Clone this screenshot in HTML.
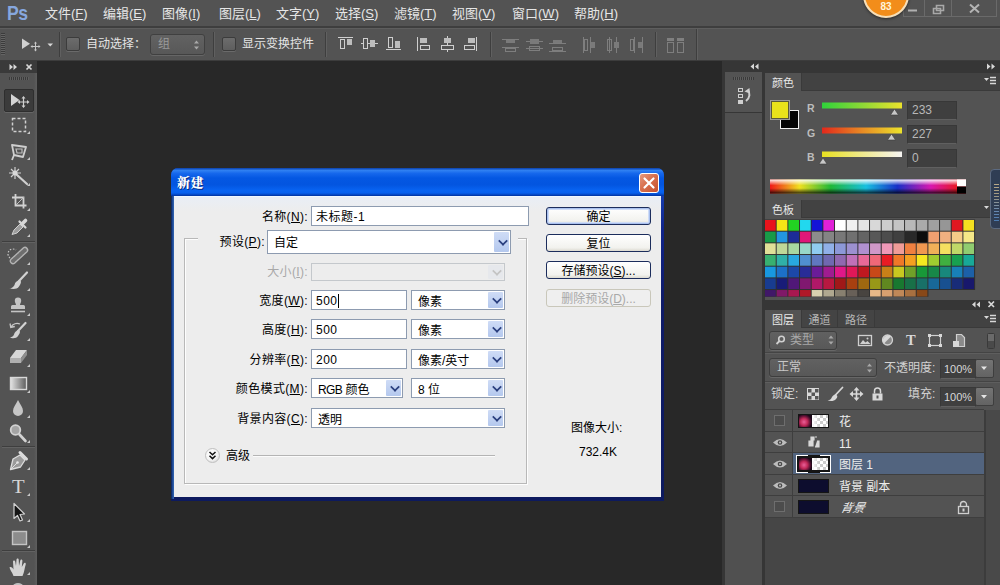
<!DOCTYPE html>
<html lang="zh-CN">
<head>
<meta charset="utf-8">
<title>新建</title>
<style>
*{box-sizing:border-box;margin:0;padding:0}
html,body{width:1000px;height:585px;overflow:hidden;background:#535353}
body{position:relative;font-family:"Liberation Sans","Noto Sans CJK SC",sans-serif;font-size:12px;color:#dcdcdc}
.abs{position:absolute}
u{text-decoration:underline;text-underline-offset:1px}
/* ---------- menu bar ---------- */
#menubar{left:0;top:0;width:1000px;height:28px;background:#535353;border-bottom:2px solid #3e3e3e}
#menubar .mi{position:absolute;top:5px;font-size:13px;color:#e6e6e6;white-space:nowrap;line-height:17px}
#pslogo{left:7px;top:0px;font-size:21px;font-weight:bold;color:#86a7de;letter-spacing:-0.5px;line-height:26px;transform:scaleX(.84);transform-origin:0 0;font-family:"Liberation Sans",sans-serif}
/* ---------- options bar ---------- */
#optbar{z-index:2;left:0;top:28px;width:1000px;height:33px;background:#535353;border-top:1px solid #5e5e5e;border-bottom:1px solid #3c3c3c}

/* options bar details */
#optbar .grip{left:1px;top:4px;width:4px;height:22px;background:repeating-linear-gradient(to bottom,#3c3c3c 0 1px,#646464 1px 2px)}
#optbar .sep{top:3px;width:2px;height:25px;border-left:1px solid #3e3e3e;border-right:1px solid #606060}
#optbar .cb{top:8px;width:14px;height:14px;border:1px solid #3c3c3c;border-radius:2px;background:linear-gradient(#6c6c6c,#5e5e5e);box-shadow:0 1px 0 #6a6a6a}
#optbar .lbl{top:7px;font-size:12px;color:#e4e4e4;white-space:nowrap;line-height:17px}
#optbar .sel{left:150px;top:5px;width:55px;height:21px;border:1px solid #404040;border-radius:3px;background:linear-gradient(#626262,#585858);box-shadow:0 1px 0 #666}
#optbar svg{position:absolute;left:0;top:0}
/* window controls */
#winctl{left:903px;top:-1px;width:94px;height:18px;border:1px solid #6a6a6a;border-top:none}
#badge{left:863px;top:-28px;width:46px;height:46px;border-radius:50%;background:#f28d1a;border:2px solid #f7dfb8;box-shadow:0 1px 3px rgba(0,0,0,.5)}
#badge span{position:absolute;left:0;width:42px;top:27px;text-align:center;font-size:10px;font-weight:bold;color:#fff4dc;line-height:12px;font-family:"Liberation Sans",sans-serif}
/* ---------- canvas ---------- */
#canvas{left:37px;top:60px;width:685px;height:525px;background:#282828}

/* ---------- dialog ---------- */
#dlg{left:171px;top:168px;width:493px;height:333px;border-radius:7px 7px 0 0;background:linear-gradient(to bottom,#1a4fc8 0,#10248a 18%,#0f1b68 40%,#0d1a5e 100%);color:#000;font-size:12px}
#dlg .tb{left:0;top:0;width:493px;height:28px;border-radius:7px 7px 0 0;background:linear-gradient(to bottom,#0a3ea8 0,#2f80f2 9%,#1668ec 19%,#0457e2 36%,#0355e0 60%,#0863f2 80%,#0760ee 89%,#0340b8 97%,#002f98 100%)}
#dlg .ttl{left:6px;top:6px;font-size:13px;font-weight:900;color:#fff;line-height:17px;text-shadow:1px 1px 0 #0a2a80;letter-spacing:0.5px;font-family:"Liberation Serif","Noto Serif CJK SC",serif}
#dlg .cls{left:468px;top:5px;width:20px;height:20px;border:1px solid #fff;border-radius:3px;background:linear-gradient(135deg,#e59a80 0,#d8704e 45%,#c4502e 100%)}
#dlg .body{left:3px;top:28px;width:487px;height:301px;background:linear-gradient(to bottom,#e9eef6 0,#ededed 14px);border-top:1px solid #f0f8ff}
#dlg .lb{position:absolute;width:140px;text-align:right;white-space:nowrap;line-height:17px;height:17px;letter-spacing:.35px}
#dlg .in{position:absolute;height:20px;background:#fff;border:1px solid #8d9bb0;line-height:21px;padding-left:4px;white-space:nowrap;letter-spacing:.5px}
#dlg .se{position:absolute;height:20px;background:#fff;border:1px solid #8d9bb0;line-height:22px;padding-left:6px;white-space:nowrap}
#dlg .se i{position:absolute;right:1px;top:1px;bottom:1px;width:15px;background:linear-gradient(#cfdcf6,#b4c8ee);border-radius:1px}
#dlg .se i:after{content:"";position:absolute;left:4.500px;top:50%;margin-top:-5px;width:6px;height:6px;border-right:2px solid #2b3f7e;border-bottom:2px solid #2b3f7e;transform:rotate(45deg) scale(.85)}
#dlg .bt{position:absolute;left:375px;width:105px;height:18px;border:1px solid #1c2d5c;border-radius:3px;background:linear-gradient(#ffffff,#f2f2ee 80%,#dcdad0);text-align:center;line-height:18px;white-space:nowrap}
#dlg .dis{color:#a8a8a8}
#dlg .se i.g:after{border-color:#c4c4c4}
/* ---------- tools ---------- */
#tools{left:0;top:60px;width:37px;height:525px;background:#535353}
#tools .hdr{left:0;top:0;width:37px;height:13px;background:#3a3a3a}

/* ---------- right panels ---------- */
#right{left:720px;top:60px;width:280px;height:525px;background:#363636}
#right .p{position:absolute;background:#535353}
#right .tabrow{position:absolute;left:45px;width:235px;height:18px;background:#424242;border-bottom:1px solid #3a3a3a}
#right .tab{position:absolute;top:0;height:18px;line-height:20px;font-size:11px;text-align:center;color:#e8e8e8;white-space:nowrap}
#right .tab.on{background:#535353;border-right:1px solid #3a3a3a;height:18px}
#right .tab.off{background:#444;border-right:1px solid #3a3a3a;color:#b8b8b8;height:17px}
#right .vbox{position:absolute;background:#3f3f3f;border:1px solid #383838;border-bottom-color:#606060;color:#b8b8b8;font-size:12px;line-height:17px;padding-left:4px;font-family:"Liberation Sans",sans-serif}
#right .t{position:absolute;white-space:nowrap;line-height:17px;font-size:12px;color:#d2d2d2}
#right .dsel{position:absolute;border:1px solid #3e3e3e;border-radius:3px;background:linear-gradient(#616161,#585858);box-shadow:0 1px 0 #676767}
#right .dbtn{position:absolute;width:19px;height:19px;border:1px solid #3e3e3e;border-radius:2px;background:linear-gradient(#747474,#636363)}
#right .row{position:absolute;left:45px;width:219px;height:22px;background:#535353;border-bottom:1px solid #3e3e3e}
#right .row .nm{position:absolute;left:74px;top:4px;line-height:17px;font-size:12px;color:#ececec;white-space:nowrap}
#right .row .eyecol{position:absolute;left:0;top:0;width:28px;height:21px;border-right:1px solid #3e3e3e}
#right .thumb{position:absolute;left:33px;top:4px;width:31px;height:14px;overflow:hidden;border:1px solid #151515}
#right .fl{position:absolute;left:0;top:0;width:13px;height:13px;background:radial-gradient(ellipse 8px 8px at 5px 7px,#e86098 0,#c02858 45%,#501030 80%,#1a0818 100%)}
#right .fl:after{content:"";position:absolute;left:13px;top:0;width:7px;height:13px;background:linear-gradient(to right,#fff,rgba(255,255,255,0))}
#right .chk{background-color:#fff;background-image:linear-gradient(45deg,#ccc 25%,transparent 25%,transparent 75%,#ccc 75%),linear-gradient(45deg,#ccc 25%,transparent 25%,transparent 75%,#ccc 75%);background-size:6px 6px;background-position:0 0,3px 3px}
#right .vis{position:absolute;left:9px;top:5px;width:11px;height:11px;border:1px solid #6e6e6e;background:#4c4c4c}
</style>
</head>
<body>
<div id="canvas" class="abs"></div>

<!-- MENUBAR -->
<div id="menubar" class="abs">
  <div id="pslogo" class="abs">Ps</div>
  <div class="mi" style="left:45px">文件(<u>F</u>)</div>
  <div class="mi" style="left:103px">编辑(<u>E</u>)</div>
  <div class="mi" style="left:162px">图像(<u>I</u>)</div>
  <div class="mi" style="left:219px">图层(<u>L</u>)</div>
  <div class="mi" style="left:276px">文字(<u>Y</u>)</div>
  <div class="mi" style="left:335px">选择(<u>S</u>)</div>
  <div class="mi" style="left:394px">滤镜(<u>T</u>)</div>
  <div class="mi" style="left:452px">视图(<u>V</u>)</div>
  <div class="mi" style="left:512px">窗口(<u>W</u>)</div>
  <div class="mi" style="left:574px">帮助(<u>H</u>)</div>
</div>

<!-- OPTIONS BAR -->
<div id="optbar" class="abs">
  <div class="grip abs"></div>
  <div class="sep abs" style="left:59px"></div>
  <div class="cb abs" style="left:66px"></div>
  <div class="lbl abs" style="left:86px">自动选择：</div>
  <div class="sel abs"><span class="abs" style="left:7px;top:1px;font-size:12px;color:#9a9a9a;line-height:17px">组</span></div>
  <div class="sep abs" style="left:213px"></div>
  <div class="cb abs" style="left:222px"></div>
  <div class="lbl abs" style="left:242px">显示变换控件</div>
  <div class="sep abs" style="left:325px"></div>
  <div class="sep abs" style="left:490px"></div>
  <div class="sep abs" style="left:655px"></div>
  <div class="sep abs" style="left:696px;top:0;height:31px"></div>
  <svg width="1000" height="31" viewBox="0 28 1000 31" shape-rendering="crispEdges">
    <!-- move tool icon -->
    <g shape-rendering="geometricPrecision">
    <path d="M22 37.500 L22 48 L30 42.800 Z" fill="#d0d0d0"/>
    <path d="M35.500 41.500 v8 M31.500 45.500 h8" stroke="#c8c8c8" stroke-width="1" fill="none"/>
    <path d="M35.500 40.500 l-1.500 2 h3z M35.500 50.500 l-1.500 -2 h3z M30.500 45.500 l2 -1.500 v3z M40.500 45.500 l-2 -1.500 v3z" fill="#c8c8c8"/>
    <path d="M47.500 42.500 h5.500 l-2.750 3z" fill="#d8d8d8"/>
    <path d="M194 42.500 l2.500 -3 l2.500 3z M194 45.500 l2.500 3 l2.500 -3z" fill="#a8a8a8"/>
    </g>
    <!-- align icons -->
    <g fill="none" stroke="#cfcfcf" stroke-width="1" transform="translate(0 -1)">
      <path d="M338 37.500 h15"/><rect x="340.500" y="39.500" width="4" height="9"/><rect x="347" y="39" width="5" height="6" fill="#bdbdbd" stroke="none"/>
      <path d="M361 43.500 h17"/><rect x="363.500" y="38.500" width="4" height="10" fill="#535353"/><rect x="370" y="40" width="5" height="7" fill="#bdbdbd" stroke="none"/>
      <path d="M386 49.500 h15"/><rect x="388.500" y="37.500" width="4" height="10"/><rect x="395" y="41" width="5" height="7" fill="#bdbdbd" stroke="none"/>
      <path d="M417.500 37 v14"/><rect x="420" y="38" width="7" height="5" fill="#bdbdbd" stroke="none"/><rect x="420.500" y="45.500" width="9" height="4"/>
      <path d="M447.500 36 v16"/><rect x="444" y="38" width="7" height="5" fill="#bdbdbd" stroke="none"/><rect x="441.500" y="45.500" width="12" height="4" fill="#535353"/>
      <path d="M476.500 37 v14"/><rect x="468" y="38" width="7" height="5" fill="#bdbdbd" stroke="none"/><rect x="464.500" y="45.500" width="10" height="4"/>
    </g>
    <!-- distribute icons (disabled) -->
    <g fill="none" stroke="#7e7e7e" stroke-width="1">
      <path d="M502 38.500 h17 M502 46.500 h17"/><rect x="506" y="39" width="9" height="3" fill="#7a7a7a" stroke="none"/><rect x="505.500" y="47.500" width="10" height="3"/>
      <path d="M526 40.500 h17 M526 47.500 h17"/><rect x="530" y="38" width="9" height="5" fill="#7a7a7a" stroke="none"/><rect x="529.500" y="45.500" width="10" height="4"/>
      <path d="M549 42.500 h17 M549 50.500 h17"/><rect x="553" y="39" width="9" height="3" fill="#7a7a7a" stroke="none"/><rect x="552.500" y="46.500" width="10" height="3"/>
      <path d="M583.500 36 v16 M590.500 36 v16"/><rect x="584.500" y="38.500" width="3" height="11"/><rect x="591" y="41" width="4" height="6" fill="#7a7a7a" stroke="none"/>
      <path d="M609.500 36 v16 M616.500 36 v16"/><rect x="607.500" y="38.500" width="4" height="11"/><rect x="614" y="41" width="5" height="6" fill="#7a7a7a" stroke="none"/>
      <path d="M634.500 36 v16 M642.500 36 v16"/><rect x="630.500" y="38.500" width="3" height="11"/><rect x="638" y="41" width="4" height="6" fill="#7a7a7a" stroke="none"/>
      <rect x="667" y="37" width="7" height="3" fill="#808080" stroke="none"/><rect x="677" y="37" width="7" height="3" fill="#808080" stroke="none"/>
      <rect x="667.500" y="41.500" width="6" height="10"/><rect x="677.500" y="41.500" width="6" height="10"/>
    </g>
  </svg>
</div>
<div id="winctl" class="abs">
  <div class="abs" style="left:20px;top:0;width:1px;height:17px;background:#6a6a6a"></div>
  <div class="abs" style="left:47px;top:0;width:1px;height:17px;background:#6a6a6a"></div>
  <svg class="abs" style="left:0;top:0" width="94" height="18" viewBox="903 -1 94 18">
    <path d="M907 10.500 h9" stroke="#b0b0b0" stroke-width="2"/>
    <path d="M935.500 5.500 h7 v5 h-7z M932.500 8.500 h7 v5 h-7z" fill="none" stroke="#a8a8a8" stroke-width="1.600"/>
    <path d="M969 4.500 l9 8 M978 4.500 l-9 8" stroke="#b4b4b4" stroke-width="2"/>
  </svg>
</div>
<div id="badge" class="abs"><span>83</span></div>

<!-- TOOLS -->
<div id="tools" class="abs">
  <div class="hdr abs"></div>
  <div class="abs" style="left:34px;top:13px;width:3px;height:512px;background:linear-gradient(to right,#535353,#5e5e5e)"></div>
  <div class="abs" style="left:9px;top:17px;width:20px;height:3px;background:repeating-linear-gradient(to right,#3a3a3a 0 1px,#5e5e5e 1px 2px)"></div>
  <div class="abs" style="left:4px;top:29px;width:30px;height:23px;background:#3b3b3b;border:1px solid #2e2e2e;border-radius:2px;box-shadow:0 1px 0 #666"></div>
  <div class="abs" style="left:2px;top:181px;width:33px;height:2px;border-top:1px solid #3e3e3e;border-bottom:1px solid #626262"></div>
  <div class="abs" style="left:2px;top:386px;width:33px;height:2px;border-top:1px solid #3e3e3e;border-bottom:1px solid #626262"></div>
  <div class="abs" style="left:2px;top:490px;width:33px;height:2px;border-top:1px solid #3e3e3e;border-bottom:1px solid #626262"></div>
  <svg class="abs" style="left:0;top:0" width="37" height="525" viewBox="0 60 37 525">
    <!-- header: >> and x -->
    <path d="M9.500 64 l3.500 3 l-3.500 3z M13.500 64 l3.500 3 l-3.500 3z" fill="#d8d8d8"/>
    <path d="M26.500 64.500 l5 5 M31.500 64.500 l-5 5" stroke="#d8d8d8" stroke-width="1.700"/>
    <!-- corner triangles -->
    <g fill="#c8c8c8">
      <path d="M30 131 v3 h-3z"/><path d="M30 157 v3 h-3z"/><path d="M30 183 v3 h-3z"/><path d="M30 208 v3 h-3z"/><path d="M30 234 v3 h-3z"/>
      <path d="M30 262 v3 h-3z"/><path d="M30 288 v3 h-3z"/><path d="M30 313 v3 h-3z"/><path d="M30 338 v3 h-3z"/><path d="M30 364 v3 h-3z"/>
      <path d="M30 390 v3 h-3z"/><path d="M30 415 v3 h-3z"/><path d="M30 440 v3 h-3z"/><path d="M30 467 v3 h-3z"/><path d="M30 493 v3 h-3z"/>
      <path d="M30 519 v3 h-3z"/><path d="M30 545 v3 h-3z"/><path d="M30 572 v3 h-3z"/>
    </g>
    <!-- move -->
    <path d="M11 94 L11 106 L19.500 100 Z" fill="#d4d4d4"/>
    <path d="M23.500 97.500 v9 M19 102 h9" stroke="#d0d0d0" stroke-width="1.200" fill="none"/>
    <path d="M23.500 96 l-2 2.500 h4z M23.500 108 l-2 -2.500 h4z M17.500 102 l2.500 -2 v4z M29.500 102 l-2.500 -2 v4z" fill="#d0d0d0"/>
    <!-- marquee -->
    <rect x="12.500" y="118.500" width="13" height="13" fill="none" stroke="#d0d0d0" stroke-width="1.500" stroke-dasharray="3 2"/>
    <!-- lasso -->
    <path d="M12 145 L26 147 L23 157 L14 155 Z M14 155 L12 160" fill="none" stroke="#cfcfcf" stroke-width="1.800" stroke-linejoin="round"/>
    <path d="M16 149 h6 v4 h-5z" fill="none" stroke="#bdbdbd" stroke-width="1.200"/>
    <!-- wand -->
    <path d="M16 174 L27 184" stroke="#cfcfcf" stroke-width="2.200" stroke-linecap="round"/>
    <path d="M15 167 v12 M9 173 h12 M11 169 l8 8 M19 169 l-8 8" stroke="#cfcfcf" stroke-width="1.200"/>
    <circle cx="15" cy="173" r="2.500" fill="#d8d8d8"/>
    <!-- crop -->
    <path d="M15.500 194 v11.500 h11 M12 197.500 h11.500 v11" fill="none" stroke="#d2d2d2" stroke-width="1.800"/>
    <path d="M16 205 l8 -8" stroke="#bdbdbd" stroke-width="1"/>
    <!-- eyedropper -->
    <path d="M12 234.500 L14 230 L20 224 L23 227 L17 233 Z" fill="#9c9c9c" stroke="#d0d0d0" stroke-width="1"/>
    <path d="M19.500 221.500 l6 6" stroke="#d6d6d6" stroke-width="2.200" stroke-linecap="round"/>
    <path d="M22 224 l3.500 -3.500" stroke="#d6d6d6" stroke-width="3.600" stroke-linecap="round"/>
    <!-- healing -->
    <path d="M13 261 L25 250" stroke="#b4b4b4" stroke-width="6.500" stroke-linecap="round"/>
    <path d="M13 261 L25 250" stroke="#6e6e6e" stroke-width="4" stroke-linecap="round" stroke-dasharray="1 1.500"/>
    <path d="M10 258 a5 5 0 1 1 6 -8" fill="none" stroke="#c8c8c8" stroke-width="1.200" stroke-dasharray="1.500 1.500"/>
    <!-- brush -->
    <path d="M27 272.500 L19 281" stroke="#d2d2d2" stroke-width="2.200" stroke-linecap="round"/>
    <path d="M19.500 280 C17 281 15 282 14.500 285 C13.500 287.500 11 288.500 9.500 288 C12 289.500 17 289.500 19 286.500 C20.500 284.500 21 282.500 21 281.500 Z" fill="#d2d2d2"/>
    <!-- stamp -->
    <path d="M18 297.500 a3.200 3.200 0 0 1 3.200 3.200 c0 2 -1.200 2.600 -1.200 4.300 h3.500 a1.500 1.500 0 0 1 1.500 1.500 v2.500 h-14 v-2.500 a1.500 1.500 0 0 1 1.500 -1.500 h3.500 c0 -1.700 -1.200 -2.300 -1.200 -4.300 a3.200 3.200 0 0 1 3.200 -3.200z" fill="#c4c4c4"/>
    <path d="M11 311.500 h14" stroke="#c4c4c4" stroke-width="1.600"/>
    <!-- history brush -->
    <path d="M25.500 323 L18 331" stroke="#d2d2d2" stroke-width="2.200" stroke-linecap="round"/>
    <path d="M18.500 330 C16 331 14.500 332 14 334.500 C13 337 11 337.500 9.500 337 C12 339 16.500 338.500 18 336 C19.500 334 20 332.500 20 331.500 Z" fill="#d2d2d2"/>
    <path d="M20 324 a7 7 0 0 0 -9 3 M10 323.500 l0.800 4 l4 -1" fill="none" stroke="#c8c8c8" stroke-width="1.300"/>
    <!-- eraser -->
    <path d="M10 358 L16 350 L27 350 L21 358 Z" fill="#d8d8d8"/>
    <path d="M10 358 L21 358 L21 363 L10 363 Z" fill="#b0b0b0"/>
    <path d="M21 358 L27 350 L27 355 L21 363 Z" fill="#8e8e8e"/>
    <!-- gradient -->
    <defs><linearGradient id="gt" x1="0" x2="1"><stop offset="0" stop-color="#e4e4e4"/><stop offset="1" stop-color="#5c5c5c"/></linearGradient></defs>
    <rect x="10.500" y="377.500" width="16" height="12" fill="url(#gt)" stroke="#d8d8d8" stroke-width="1.400"/>
    <!-- blur drop -->
    <path d="M18 400 C20 404 23 407.500 23 411 a5 5 0 0 1 -10 0 C13 407.500 16 404 18 400 Z" fill="#c6c6c6"/>
    <!-- dodge -->
    <circle cx="15.500" cy="430" r="4.800" fill="#a4a4a4" stroke="#d2d2d2" stroke-width="1.800"/>
    <path d="M19.500 434.500 L25.500 441" stroke="#d2d2d2" stroke-width="2.600" stroke-linecap="round"/>
    <!-- pen -->
    <path d="M10.500 469.500 L13 459 L20 455 L25 460 L20.500 467 Z" fill="#9a9a9a" stroke="#dcdcdc" stroke-width="1.300" stroke-linejoin="round"/>
    <path d="M10.500 469.500 L17 463" stroke="#dcdcdc" stroke-width="1"/>
    <circle cx="17.500" cy="462.500" r="1.300" fill="#e6e6e6"/>
    <path d="M20 452.500 l6.500 6.500" stroke="#dcdcdc" stroke-width="3" stroke-linecap="round"/>
    <!-- type -->
    <text x="16" y="493" text-anchor="middle" font-family="Liberation Serif, serif" font-size="18" fill="#d6d6d6" transform="scale(1.15 1)">T</text>
    <!-- path select -->
    <path d="M14 503.500 L14 518.500 L17.500 515.500 L20 521 L22.500 520 L20 514.500 L24.500 514 Z" fill="#141414" stroke="#d0d0d0" stroke-width="1.200" stroke-linejoin="round"/>
    <!-- rectangle -->
    <rect x="12.500" y="531.500" width="14" height="13" fill="#8c8c8c" stroke="#c4c4c4" stroke-width="1.400"/>
    <!-- hand -->
    <path d="M13.500 576 C12 572 10 570 9.500 567.500 C10.500 566.500 12 567 13.500 569.500 L13 561.500 C13 560 15 560 15.200 561.500 L16 566 L16.500 559.500 C16.600 558 18.600 558 18.700 559.500 L19 566 L20.300 560.500 C20.600 559 22.500 559.300 22.400 561 L21.800 567 L23.800 563.500 C24.500 562.200 26.200 563 25.700 564.500 C24.500 568 24.500 572 22.500 576 Z" fill="#d4d4d4"/>
    <ellipse cx="18" cy="586" rx="5" ry="3" fill="#c0c0c0"/>
  </svg>
</div>

<!-- RIGHT PANELS -->
<div id="right" class="abs">
  <div class="abs" style="left:0;top:0;width:2px;height:525px;background:#282828"></div>
  <!-- top strip arrows -->
  <svg class="abs" style="left:0;top:0" width="280" height="13" viewBox="720 60 280 13">
    <path d="M754 63.500 l-3.500 3 l3.500 3z M758.500 63.500 l-3.500 3 l3.500 3z" fill="#d8d8d8"/>
    <path d="M987 63.500 l3.500 3 l-3.500 3z M991.500 63.500 l3.500 3 l-3.500 3z" fill="#d8d8d8"/>
  </svg>
  <!-- narrow column -->
  <div class="p" style="left:5px;top:12px;width:37px;height:40px"></div>
  <div class="p" style="left:5px;top:53px;width:37px;height:472px;background:#505050"></div>
  <div class="abs" style="left:13px;top:17px;width:21px;height:3px;background:repeating-linear-gradient(to right,#3a3a3a 0 1px,#5e5e5e 1px 2px)"></div>
  <svg class="abs" style="left:5px;top:12px" width="37" height="40" viewBox="725 72 37 40">
    <g fill="none" stroke="#cfcfcf" stroke-width="1"><rect x="738.500" y="88.500" width="4" height="3"/><rect x="738.500" y="94.500" width="4" height="3"/></g>
    <rect x="738" y="100" width="5" height="4" fill="#cfcfcf"/>
    <path d="M746 101 C750 98 750.500 93 747.500 90" fill="none" stroke="#cfcfcf" stroke-width="2"/>
    <path d="M744.500 91.500 l5 -3.500 l0.500 5.500z" fill="#cfcfcf"/>
  </svg>

  <!-- COLOR PANEL -->
  <div class="tabrow" style="top:13px"><div class="tab on" style="left:0;width:37px">颜色</div></div>
  <div class="p" style="left:45px;top:31px;width:235px;height:109px"></div>
  <svg class="abs" style="left:0;top:0" width="280" height="145" viewBox="720 60 280 145">
    <path d="M984 78 h5 l-2.500 3z" fill="#d8d8d8"/><path d="M990 77.500 h6 M990 80.500 h6 M990 83.500 h6" stroke="#d8d8d8" stroke-width="1.300"/>
    <defs>
      <linearGradient id="gr" x1="0" x2="1"><stop offset="0" stop-color="#2fd23a"/><stop offset=".5" stop-color="#8cd836"/><stop offset="1" stop-color="#ece32c"/></linearGradient>
      <linearGradient id="gg" x1="0" x2="1"><stop offset="0" stop-color="#e2281c"/><stop offset=".5" stop-color="#e88a24"/><stop offset="1" stop-color="#ece32c"/></linearGradient>
      <linearGradient id="gb" x1="0" x2="1"><stop offset="0" stop-color="#e8e020"/><stop offset=".5" stop-color="#efe98c"/><stop offset="1" stop-color="#f6f4f2"/></linearGradient>
      <linearGradient id="sp" x1="0" x2="1"><stop offset="0" stop-color="#f01818"/><stop offset=".15" stop-color="#f0e020"/><stop offset=".31" stop-color="#20b838"/><stop offset=".49" stop-color="#18c0e0"/><stop offset=".65" stop-color="#1830c8"/><stop offset=".82" stop-color="#d818b0"/><stop offset=".95" stop-color="#e81828"/><stop offset="1" stop-color="#e81828"/></linearGradient>
      <linearGradient id="spv" x1="0" y1="0" x2="0" y2="1"><stop offset="0" stop-color="#fff" stop-opacity=".95"/><stop offset=".42" stop-color="#fff" stop-opacity="0"/><stop offset=".62" stop-color="#000" stop-opacity="0"/><stop offset="1" stop-color="#000" stop-opacity=".8"/></linearGradient>
    </defs>
    <!-- bg/fg swatches -->
    <rect x="780.500" y="110.500" width="18" height="18" fill="#050505" stroke="#f0f0f0" stroke-width="1"/>
    <rect x="770.500" y="100.500" width="19" height="19" fill="none" stroke="#9a9a9a" stroke-width="1"/>
    <rect x="771.500" y="101.500" width="17" height="17" fill="#e9e31b" stroke="#5a5a38" stroke-width="1"/>
    <!-- sliders -->
    <rect x="822" y="102.500" width="80" height="6" fill="url(#gr)"/>
    <rect x="822" y="127.500" width="80" height="6" fill="url(#gg)"/>
    <rect x="822" y="151.500" width="80" height="5.500" fill="url(#gb)"/>
    <g fill="#c8c8c8" stroke="#3c3c3c" stroke-width=".6">
      <path d="M894.500 109 l4 6 h-8z"/><path d="M891.500 134 l4 6 h-8z"/><path d="M823 158 l4 6 h-8z"/>
    </g>
    <!-- spectrum -->
    <rect x="770" y="179.500" width="196" height="14" fill="url(#sp)"/>
    <rect x="770" y="179.500" width="196" height="14" fill="url(#spv)"/>
    <rect x="957" y="179.500" width="9" height="7" fill="#ffffff"/><rect x="957" y="186.500" width="9" height="7" fill="#000000"/>
  </svg>
  <div class="t" style="left:87px;top:40px;font-size:10.500px;font-weight:bold;color:#bcbcbc;font-family:'Liberation Sans',sans-serif">R</div>
  <div class="t" style="left:87px;top:65px;font-size:10.500px;font-weight:bold;color:#bcbcbc;font-family:'Liberation Sans',sans-serif">G</div>
  <div class="t" style="left:87px;top:89px;font-size:10.500px;font-weight:bold;color:#bcbcbc;font-family:'Liberation Sans',sans-serif">B</div>
  <div class="vbox" style="left:187px;top:41px;width:50px;height:19px">233</div>
  <div class="vbox" style="left:187px;top:65px;width:50px;height:19px">227</div>
  <div class="vbox" style="left:187px;top:89px;width:50px;height:19px">0</div>

  <!-- <svg class="abs" style="left:0;top:0" width="280" height="245" viewBox="0 0 280 245">
<path d="M44.500 159.500 h210.600 v70.400 h-46.700 v6.800 h-163.900z" fill="#303030"/>
<rect x="45.00" y="160.00" width="10.7" height="10.7" fill="#e8141c"/>
<rect x="56.67" y="160.00" width="10.7" height="10.7" fill="#f5e616"/>
<rect x="68.34" y="160.00" width="10.7" height="10.7" fill="#22d322"/>
<rect x="80.01" y="160.00" width="10.7" height="10.7" fill="#22d8ee"/>
<rect x="91.68" y="160.00" width="10.7" height="10.7" fill="#1414d8"/>
<rect x="103.35" y="160.00" width="10.7" height="10.7" fill="#e020d8"/>
<rect x="115.02" y="160.00" width="10.7" height="10.7" fill="#ffffff"/>
<rect x="126.69" y="160.00" width="10.7" height="10.7" fill="#f0f0f0"/>
<rect x="138.36" y="160.00" width="10.7" height="10.7" fill="#e4e4e4"/>
<rect x="150.03" y="160.00" width="10.7" height="10.7" fill="#d8d8d8"/>
<rect x="161.70" y="160.00" width="10.7" height="10.7" fill="#cccccc"/>
<rect x="173.37" y="160.00" width="10.7" height="10.7" fill="#c4c4c4"/>
<rect x="185.04" y="160.00" width="10.7" height="10.7" fill="#b8b8b8"/>
<rect x="196.71" y="160.00" width="10.7" height="10.7" fill="#aaaaaa"/>
<rect x="208.38" y="160.00" width="10.7" height="10.7" fill="#a0a0a0"/>
<rect x="220.05" y="160.00" width="10.7" height="10.7" fill="#969696"/>
<rect x="231.72" y="160.00" width="10.7" height="10.7" fill="#e01820"/>
<rect x="243.39" y="160.00" width="10.7" height="10.7" fill="#f5e020"/>
<rect x="45.00" y="171.67" width="10.7" height="10.7" fill="#189a48"/>
<rect x="56.67" y="171.67" width="10.7" height="10.7" fill="#2296e0"/>
<rect x="68.34" y="171.67" width="10.7" height="10.7" fill="#1c2c98"/>
<rect x="80.01" y="171.67" width="10.7" height="10.7" fill="#e01878"/>
<rect x="91.68" y="171.67" width="10.7" height="10.7" fill="#8c8c8c"/>
<rect x="103.35" y="171.67" width="10.7" height="10.7" fill="#848484"/>
<rect x="115.02" y="171.67" width="10.7" height="10.7" fill="#787878"/>
<rect x="126.69" y="171.67" width="10.7" height="10.7" fill="#707070"/>
<rect x="138.36" y="171.67" width="10.7" height="10.7" fill="#646464"/>
<rect x="150.03" y="171.67" width="10.7" height="10.7" fill="#585858"/>
<rect x="161.70" y="171.67" width="10.7" height="10.7" fill="#4c4c4c"/>
<rect x="173.37" y="171.67" width="10.7" height="10.7" fill="#404040"/>
<rect x="185.04" y="171.67" width="10.7" height="10.7" fill="#282828"/>
<rect x="196.71" y="171.67" width="10.7" height="10.7" fill="#0c0c0c"/>
<rect x="208.38" y="171.67" width="10.7" height="10.7" fill="#f0a070"/>
<rect x="220.05" y="171.67" width="10.7" height="10.7" fill="#f0b080"/>
<rect x="231.72" y="171.67" width="10.7" height="10.7" fill="#f5cc88"/>
<rect x="243.39" y="171.67" width="10.7" height="10.7" fill="#f5e888"/>
<rect x="45.00" y="183.34" width="10.7" height="10.7" fill="#e0e098"/>
<rect x="56.67" y="183.34" width="10.7" height="10.7" fill="#c0d898"/>
<rect x="68.34" y="183.34" width="10.7" height="10.7" fill="#a8d8a0"/>
<rect x="80.01" y="183.34" width="10.7" height="10.7" fill="#98d8c8"/>
<rect x="91.68" y="183.34" width="10.7" height="10.7" fill="#90ccf0"/>
<rect x="103.35" y="183.34" width="10.7" height="10.7" fill="#90b0e8"/>
<rect x="115.02" y="183.34" width="10.7" height="10.7" fill="#8c98d8"/>
<rect x="126.69" y="183.34" width="10.7" height="10.7" fill="#9c90d0"/>
<rect x="138.36" y="183.34" width="10.7" height="10.7" fill="#b090d0"/>
<rect x="150.03" y="183.34" width="10.7" height="10.7" fill="#d098c8"/>
<rect x="161.70" y="183.34" width="10.7" height="10.7" fill="#f098b8"/>
<rect x="173.37" y="183.34" width="10.7" height="10.7" fill="#f09c98"/>
<rect x="185.04" y="183.34" width="10.7" height="10.7" fill="#f08040"/>
<rect x="196.71" y="183.34" width="10.7" height="10.7" fill="#f09850"/>
<rect x="208.38" y="183.34" width="10.7" height="10.7" fill="#f0b058"/>
<rect x="220.05" y="183.34" width="10.7" height="10.7" fill="#f5e060"/>
<rect x="231.72" y="183.34" width="10.7" height="10.7" fill="#c0d868"/>
<rect x="243.39" y="183.34" width="10.7" height="10.7" fill="#90cc70"/>
<rect x="45.00" y="195.01" width="10.7" height="10.7" fill="#38b070"/>
<rect x="56.67" y="195.01" width="10.7" height="10.7" fill="#30b0a8"/>
<rect x="68.34" y="195.01" width="10.7" height="10.7" fill="#28a8e0"/>
<rect x="80.01" y="195.01" width="10.7" height="10.7" fill="#5090d0"/>
<rect x="91.68" y="195.01" width="10.7" height="10.7" fill="#6078c0"/>
<rect x="103.35" y="195.01" width="10.7" height="10.7" fill="#7068b0"/>
<rect x="115.02" y="195.01" width="10.7" height="10.7" fill="#9068b0"/>
<rect x="126.69" y="195.01" width="10.7" height="10.7" fill="#c070b8"/>
<rect x="138.36" y="195.01" width="10.7" height="10.7" fill="#e86898"/>
<rect x="150.03" y="195.01" width="10.7" height="10.7" fill="#f06878"/>
<rect x="161.70" y="195.01" width="10.7" height="10.7" fill="#e81c24"/>
<rect x="173.37" y="195.01" width="10.7" height="10.7" fill="#f07828"/>
<rect x="185.04" y="195.01" width="10.7" height="10.7" fill="#f5a020"/>
<rect x="196.71" y="195.01" width="10.7" height="10.7" fill="#f5e820"/>
<rect x="208.38" y="195.01" width="10.7" height="10.7" fill="#a0cc30"/>
<rect x="220.05" y="195.01" width="10.7" height="10.7" fill="#40b040"/>
<rect x="231.72" y="195.01" width="10.7" height="10.7" fill="#18a050"/>
<rect x="243.39" y="195.01" width="10.7" height="10.7" fill="#18a898"/>
<rect x="45.00" y="206.68" width="10.7" height="10.7" fill="#1898e0"/>
<rect x="56.67" y="206.68" width="10.7" height="10.7" fill="#1c70c8"/>
<rect x="68.34" y="206.68" width="10.7" height="10.7" fill="#1c48a8"/>
<rect x="80.01" y="206.68" width="10.7" height="10.7" fill="#282c98"/>
<rect x="91.68" y="206.68" width="10.7" height="10.7" fill="#6a1c98"/>
<rect x="103.35" y="206.68" width="10.7" height="10.7" fill="#a01c90"/>
<rect x="115.02" y="206.68" width="10.7" height="10.7" fill="#e01888"/>
<rect x="126.69" y="206.68" width="10.7" height="10.7" fill="#e01858"/>
<rect x="138.36" y="206.68" width="10.7" height="10.7" fill="#c01820"/>
<rect x="150.03" y="206.68" width="10.7" height="10.7" fill="#c84818"/>
<rect x="161.70" y="206.68" width="10.7" height="10.7" fill="#c88018"/>
<rect x="173.37" y="206.68" width="10.7" height="10.7" fill="#c8c820"/>
<rect x="185.04" y="206.68" width="10.7" height="10.7" fill="#70a028"/>
<rect x="196.71" y="206.68" width="10.7" height="10.7" fill="#189838"/>
<rect x="208.38" y="206.68" width="10.7" height="10.7" fill="#188848"/>
<rect x="220.05" y="206.68" width="10.7" height="10.7" fill="#18887c"/>
<rect x="231.72" y="206.68" width="10.7" height="10.7" fill="#1880b8"/>
<rect x="243.39" y="206.68" width="10.7" height="10.7" fill="#1c60a8"/>
<rect x="45.00" y="218.35" width="10.7" height="10.7" fill="#183c90"/>
<rect x="56.67" y="218.35" width="10.7" height="10.7" fill="#181c78"/>
<rect x="68.34" y="218.35" width="10.7" height="10.7" fill="#501878"/>
<rect x="80.01" y="218.35" width="10.7" height="10.7" fill="#801870"/>
<rect x="91.68" y="218.35" width="10.7" height="10.7" fill="#b01868"/>
<rect x="103.35" y="218.35" width="10.7" height="10.7" fill="#b81840"/>
<rect x="115.02" y="218.35" width="10.7" height="10.7" fill="#a01818"/>
<rect x="126.69" y="218.35" width="10.7" height="10.7" fill="#a84010"/>
<rect x="138.36" y="218.35" width="10.7" height="10.7" fill="#a06810"/>
<rect x="150.03" y="218.35" width="10.7" height="10.7" fill="#989818"/>
<rect x="161.70" y="218.35" width="10.7" height="10.7" fill="#608820"/>
<rect x="173.37" y="218.35" width="10.7" height="10.7" fill="#187830"/>
<rect x="185.04" y="218.35" width="10.7" height="10.7" fill="#187048"/>
<rect x="196.71" y="218.35" width="10.7" height="10.7" fill="#187068"/>
<rect x="208.38" y="218.35" width="10.7" height="10.7" fill="#186898"/>
<rect x="220.05" y="218.35" width="10.7" height="10.7" fill="#185090"/>
<rect x="231.72" y="218.35" width="10.7" height="10.7" fill="#182c78"/>
<rect x="243.39" y="218.35" width="10.7" height="10.7" fill="#18186c"/>
<rect x="45.00" y="230.02" width="10.7" height="6.5" fill="#401868"/>
<rect x="56.67" y="230.02" width="10.7" height="6.5" fill="#801868"/>
<rect x="68.34" y="230.02" width="10.7" height="6.5" fill="#a81850"/>
<rect x="80.01" y="230.02" width="10.7" height="6.5" fill="#b01828"/>
<rect x="91.68" y="230.02" width="10.7" height="6.5" fill="#d8d0b0"/>
<rect x="103.35" y="230.02" width="10.7" height="6.5" fill="#b0a890"/>
<rect x="115.02" y="230.02" width="10.7" height="6.5" fill="#888070"/>
<rect x="126.69" y="230.02" width="10.7" height="6.5" fill="#686058"/>
<rect x="138.36" y="230.02" width="10.7" height="6.5" fill="#484440"/>
<rect x="150.03" y="230.02" width="10.7" height="6.5" fill="#e8b888"/>
<rect x="161.70" y="230.02" width="10.7" height="6.5" fill="#d8a070"/>
<rect x="173.37" y="230.02" width="10.7" height="6.5" fill="#c08858"/>
<rect x="185.04" y="230.02" width="10.7" height="6.5" fill="#a87040"/>
<rect x="196.71" y="230.02" width="10.7" height="6.5" fill="#884818"/>
</svg> PANEL -->
  <div class="tabrow" style="top:140px"><div class="tab on" style="left:0;width:37px">色板</div></div>
  <div class="p" style="left:45px;top:158px;width:235px;height:82px"></div>
  <svg class="abs" style="left:0;top:140px" width="280" height="20" viewBox="720 200 280 20">
    <path d="M984 206 h5 l-2.500 3z" fill="#d8d8d8"/><path d="M990 205.500 h6 M990 208.500 h6 M990 211.500 h6" stroke="#d8d8d8" stroke-width="1.300"/>
  </svg>
  <svg class="abs" style="left:0;top:0" width="280" height="245" viewBox="0 0 280 245">
<path d="M44.500 159.500 h210.600 v70.400 h-46.700 v6.800 h-163.900z" fill="#303030"/>
<rect x="45.00" y="160.00" width="10.7" height="10.7" fill="#e8141c"/>
<rect x="56.67" y="160.00" width="10.7" height="10.7" fill="#f5e616"/>
<rect x="68.34" y="160.00" width="10.7" height="10.7" fill="#22d322"/>
<rect x="80.01" y="160.00" width="10.7" height="10.7" fill="#22d8ee"/>
<rect x="91.68" y="160.00" width="10.7" height="10.7" fill="#1414d8"/>
<rect x="103.35" y="160.00" width="10.7" height="10.7" fill="#e020d8"/>
<rect x="115.02" y="160.00" width="10.7" height="10.7" fill="#ffffff"/>
<rect x="126.69" y="160.00" width="10.7" height="10.7" fill="#f0f0f0"/>
<rect x="138.36" y="160.00" width="10.7" height="10.7" fill="#e4e4e4"/>
<rect x="150.03" y="160.00" width="10.7" height="10.7" fill="#d8d8d8"/>
<rect x="161.70" y="160.00" width="10.7" height="10.7" fill="#cccccc"/>
<rect x="173.37" y="160.00" width="10.7" height="10.7" fill="#c4c4c4"/>
<rect x="185.04" y="160.00" width="10.7" height="10.7" fill="#b8b8b8"/>
<rect x="196.71" y="160.00" width="10.7" height="10.7" fill="#aaaaaa"/>
<rect x="208.38" y="160.00" width="10.7" height="10.7" fill="#a0a0a0"/>
<rect x="220.05" y="160.00" width="10.7" height="10.7" fill="#969696"/>
<rect x="231.72" y="160.00" width="10.7" height="10.7" fill="#e01820"/>
<rect x="243.39" y="160.00" width="10.7" height="10.7" fill="#f5e020"/>
<rect x="45.00" y="171.67" width="10.7" height="10.7" fill="#189a48"/>
<rect x="56.67" y="171.67" width="10.7" height="10.7" fill="#2296e0"/>
<rect x="68.34" y="171.67" width="10.7" height="10.7" fill="#1c2c98"/>
<rect x="80.01" y="171.67" width="10.7" height="10.7" fill="#e01878"/>
<rect x="91.68" y="171.67" width="10.7" height="10.7" fill="#8c8c8c"/>
<rect x="103.35" y="171.67" width="10.7" height="10.7" fill="#848484"/>
<rect x="115.02" y="171.67" width="10.7" height="10.7" fill="#787878"/>
<rect x="126.69" y="171.67" width="10.7" height="10.7" fill="#707070"/>
<rect x="138.36" y="171.67" width="10.7" height="10.7" fill="#646464"/>
<rect x="150.03" y="171.67" width="10.7" height="10.7" fill="#585858"/>
<rect x="161.70" y="171.67" width="10.7" height="10.7" fill="#4c4c4c"/>
<rect x="173.37" y="171.67" width="10.7" height="10.7" fill="#404040"/>
<rect x="185.04" y="171.67" width="10.7" height="10.7" fill="#282828"/>
<rect x="196.71" y="171.67" width="10.7" height="10.7" fill="#0c0c0c"/>
<rect x="208.38" y="171.67" width="10.7" height="10.7" fill="#f0a070"/>
<rect x="220.05" y="171.67" width="10.7" height="10.7" fill="#f0b080"/>
<rect x="231.72" y="171.67" width="10.7" height="10.7" fill="#f5cc88"/>
<rect x="243.39" y="171.67" width="10.7" height="10.7" fill="#f5e888"/>
<rect x="45.00" y="183.34" width="10.7" height="10.7" fill="#e0e098"/>
<rect x="56.67" y="183.34" width="10.7" height="10.7" fill="#c0d898"/>
<rect x="68.34" y="183.34" width="10.7" height="10.7" fill="#a8d8a0"/>
<rect x="80.01" y="183.34" width="10.7" height="10.7" fill="#98d8c8"/>
<rect x="91.68" y="183.34" width="10.7" height="10.7" fill="#90ccf0"/>
<rect x="103.35" y="183.34" width="10.7" height="10.7" fill="#90b0e8"/>
<rect x="115.02" y="183.34" width="10.7" height="10.7" fill="#8c98d8"/>
<rect x="126.69" y="183.34" width="10.7" height="10.7" fill="#9c90d0"/>
<rect x="138.36" y="183.34" width="10.7" height="10.7" fill="#b090d0"/>
<rect x="150.03" y="183.34" width="10.7" height="10.7" fill="#d098c8"/>
<rect x="161.70" y="183.34" width="10.7" height="10.7" fill="#f098b8"/>
<rect x="173.37" y="183.34" width="10.7" height="10.7" fill="#f09c98"/>
<rect x="185.04" y="183.34" width="10.7" height="10.7" fill="#f08040"/>
<rect x="196.71" y="183.34" width="10.7" height="10.7" fill="#f09850"/>
<rect x="208.38" y="183.34" width="10.7" height="10.7" fill="#f0b058"/>
<rect x="220.05" y="183.34" width="10.7" height="10.7" fill="#f5e060"/>
<rect x="231.72" y="183.34" width="10.7" height="10.7" fill="#c0d868"/>
<rect x="243.39" y="183.34" width="10.7" height="10.7" fill="#90cc70"/>
<rect x="45.00" y="195.01" width="10.7" height="10.7" fill="#38b070"/>
<rect x="56.67" y="195.01" width="10.7" height="10.7" fill="#30b0a8"/>
<rect x="68.34" y="195.01" width="10.7" height="10.7" fill="#28a8e0"/>
<rect x="80.01" y="195.01" width="10.7" height="10.7" fill="#5090d0"/>
<rect x="91.68" y="195.01" width="10.7" height="10.7" fill="#6078c0"/>
<rect x="103.35" y="195.01" width="10.7" height="10.7" fill="#7068b0"/>
<rect x="115.02" y="195.01" width="10.7" height="10.7" fill="#9068b0"/>
<rect x="126.69" y="195.01" width="10.7" height="10.7" fill="#c070b8"/>
<rect x="138.36" y="195.01" width="10.7" height="10.7" fill="#e86898"/>
<rect x="150.03" y="195.01" width="10.7" height="10.7" fill="#f06878"/>
<rect x="161.70" y="195.01" width="10.7" height="10.7" fill="#e81c24"/>
<rect x="173.37" y="195.01" width="10.7" height="10.7" fill="#f07828"/>
<rect x="185.04" y="195.01" width="10.7" height="10.7" fill="#f5a020"/>
<rect x="196.71" y="195.01" width="10.7" height="10.7" fill="#f5e820"/>
<rect x="208.38" y="195.01" width="10.7" height="10.7" fill="#a0cc30"/>
<rect x="220.05" y="195.01" width="10.7" height="10.7" fill="#40b040"/>
<rect x="231.72" y="195.01" width="10.7" height="10.7" fill="#18a050"/>
<rect x="243.39" y="195.01" width="10.7" height="10.7" fill="#18a898"/>
<rect x="45.00" y="206.68" width="10.7" height="10.7" fill="#1898e0"/>
<rect x="56.67" y="206.68" width="10.7" height="10.7" fill="#1c70c8"/>
<rect x="68.34" y="206.68" width="10.7" height="10.7" fill="#1c48a8"/>
<rect x="80.01" y="206.68" width="10.7" height="10.7" fill="#282c98"/>
<rect x="91.68" y="206.68" width="10.7" height="10.7" fill="#6a1c98"/>
<rect x="103.35" y="206.68" width="10.7" height="10.7" fill="#a01c90"/>
<rect x="115.02" y="206.68" width="10.7" height="10.7" fill="#e01888"/>
<rect x="126.69" y="206.68" width="10.7" height="10.7" fill="#e01858"/>
<rect x="138.36" y="206.68" width="10.7" height="10.7" fill="#c01820"/>
<rect x="150.03" y="206.68" width="10.7" height="10.7" fill="#c84818"/>
<rect x="161.70" y="206.68" width="10.7" height="10.7" fill="#c88018"/>
<rect x="173.37" y="206.68" width="10.7" height="10.7" fill="#c8c820"/>
<rect x="185.04" y="206.68" width="10.7" height="10.7" fill="#70a028"/>
<rect x="196.71" y="206.68" width="10.7" height="10.7" fill="#189838"/>
<rect x="208.38" y="206.68" width="10.7" height="10.7" fill="#188848"/>
<rect x="220.05" y="206.68" width="10.7" height="10.7" fill="#18887c"/>
<rect x="231.72" y="206.68" width="10.7" height="10.7" fill="#1880b8"/>
<rect x="243.39" y="206.68" width="10.7" height="10.7" fill="#1c60a8"/>
<rect x="45.00" y="218.35" width="10.7" height="10.7" fill="#183c90"/>
<rect x="56.67" y="218.35" width="10.7" height="10.7" fill="#181c78"/>
<rect x="68.34" y="218.35" width="10.7" height="10.7" fill="#501878"/>
<rect x="80.01" y="218.35" width="10.7" height="10.7" fill="#801870"/>
<rect x="91.68" y="218.35" width="10.7" height="10.7" fill="#b01868"/>
<rect x="103.35" y="218.35" width="10.7" height="10.7" fill="#b81840"/>
<rect x="115.02" y="218.35" width="10.7" height="10.7" fill="#a01818"/>
<rect x="126.69" y="218.35" width="10.7" height="10.7" fill="#a84010"/>
<rect x="138.36" y="218.35" width="10.7" height="10.7" fill="#a06810"/>
<rect x="150.03" y="218.35" width="10.7" height="10.7" fill="#989818"/>
<rect x="161.70" y="218.35" width="10.7" height="10.7" fill="#608820"/>
<rect x="173.37" y="218.35" width="10.7" height="10.7" fill="#187830"/>
<rect x="185.04" y="218.35" width="10.7" height="10.7" fill="#187048"/>
<rect x="196.71" y="218.35" width="10.7" height="10.7" fill="#187068"/>
<rect x="208.38" y="218.35" width="10.7" height="10.7" fill="#186898"/>
<rect x="220.05" y="218.35" width="10.7" height="10.7" fill="#185090"/>
<rect x="231.72" y="218.35" width="10.7" height="10.7" fill="#182c78"/>
<rect x="243.39" y="218.35" width="10.7" height="10.7" fill="#18186c"/>
<rect x="45.00" y="230.02" width="10.7" height="6.5" fill="#401868"/>
<rect x="56.67" y="230.02" width="10.7" height="6.5" fill="#801868"/>
<rect x="68.34" y="230.02" width="10.7" height="6.5" fill="#a81850"/>
<rect x="80.01" y="230.02" width="10.7" height="6.5" fill="#b01828"/>
<rect x="91.68" y="230.02" width="10.7" height="6.5" fill="#d8d0b0"/>
<rect x="103.35" y="230.02" width="10.7" height="6.5" fill="#b0a890"/>
<rect x="115.02" y="230.02" width="10.7" height="6.5" fill="#888070"/>
<rect x="126.69" y="230.02" width="10.7" height="6.5" fill="#686058"/>
<rect x="138.36" y="230.02" width="10.7" height="6.5" fill="#484440"/>
<rect x="150.03" y="230.02" width="10.7" height="6.5" fill="#e8b888"/>
<rect x="161.70" y="230.02" width="10.7" height="6.5" fill="#d8a070"/>
<rect x="173.37" y="230.02" width="10.7" height="6.5" fill="#c08858"/>
<rect x="185.04" y="230.02" width="10.7" height="6.5" fill="#a87040"/>
<rect x="196.71" y="230.02" width="10.7" height="6.5" fill="#884818"/>
</svg>

  <!-- LAYERS PANEL -->
  <svg class="abs" style="left:0;top:240px" width="280" height="10" viewBox="720 300 280 10">
    <path d="M975.500 301.500 l-3.500 3 l3.500 3z M980 301.500 l-3.500 3 l3.500 3z" fill="#d8d8d8"/>
    <path d="M988.500 301.500 l5.500 5.500 M994 301.500 l-5.500 5.500" stroke="#d8d8d8" stroke-width="1.700"/>
  </svg>
  <svg class="abs" style="left:260px;top:250px;z-index:3" width="20" height="18" viewBox="980 310 20 18"><path d="M984 316 h5 l-2.500 3z" fill="#d8d8d8"/><path d="M990 315.500 h6 M990 318.500 h6 M990 321.500 h6" stroke="#d8d8d8" stroke-width="1.300"/></svg>
  <div class="tabrow" style="top:250px">
    <div class="tab on" style="left:0;width:37px">图层</div>
    <div class="tab off" style="left:37px;width:36px">通道</div>
    <div class="tab off" style="left:73px;width:37px">路径</div>
  </div>
  <div class="p" style="left:45px;top:268px;width:235px;height:82px"></div>
  <div class="p" style="left:45px;top:350px;width:219px;height:175px;background:#464646"></div>
  <div class="p" style="left:264px;top:350px;width:16px;height:175px;background:#494949;border-left:2px solid #3c3c3c"></div>

  <!-- filter row -->
  <div class="dsel" style="left:49px;top:271px;width:68px;height:19px"></div>
  <div class="t" style="left:70px;top:272px;color:#a8a8a8">类型</div>
  <svg class="abs" style="left:45px;top:268px;z-index:3" width="235" height="82" viewBox="765 328 235 82">
    <circle cx="781.500" cy="339" r="2.800" fill="none" stroke="#d0d0d0" stroke-width="1.600"/><path d="M779.500 341 l-3 3" stroke="#d0d0d0" stroke-width="1.800"/>
    <path d="M828.500 338.500 l2.500 -3 l2.500 3z M828.500 341.500 l2.500 3 l2.500 -3z" fill="#a8a8a8"/>
    <!-- filter icons -->
    <rect x="858.500" y="335.500" width="13" height="10" fill="none" stroke="#d0d0d0" stroke-width="1.300"/><path d="M860 344 l3 -4 l2.500 2.500 l2 -1.500 l3 3z" fill="#d0d0d0"/><circle cx="867.500" cy="338.500" r="1" fill="#d0d0d0"/>
    <circle cx="887.500" cy="340" r="5" fill="#8a8a8a" stroke="#d0d0d0" stroke-width="1.300"/><path d="M884 343.500 a5 5 0 0 1 7 -7z" fill="#d8d8d8"/>
    <rect x="929.500" y="335.500" width="11" height="10" fill="none" stroke="#d0d0d0" stroke-width="1.200"/><g fill="#d8d8d8"><rect x="928" y="334" width="3" height="3"/><rect x="939" y="334" width="3" height="3"/><rect x="928" y="344" width="3" height="3"/><rect x="939" y="344" width="3" height="3"/></g>
    <path d="M956.500 334.500 h5 l3 3 v9 h-8z" fill="#8a8a8a" stroke="#d0d0d0" stroke-width="1.200"/><rect x="953" y="341" width="6" height="6" fill="#d8d8d8"/>
    <rect x="987.500" y="333.500" width="7" height="15" rx="1" fill="#6a6a6a" stroke="#3a3a3a"/><rect x="988" y="341" width="6" height="7" fill="#4a4a4a"/>
    <!-- separators -->
    <path d="M765 352.500 h235 M765 381.500 h235" stroke="#444" stroke-width="1"/>
    <path d="M765 353.500 h235 M765 382.500 h235" stroke="#5e5e5e" stroke-width="1"/>
    <!-- blend arrows -->
    <path d="M867 366.500 l2.500 -3 l2.500 3z M867 369.500 l2.500 3 l2.500 -3z" fill="#a8a8a8"/>
    <!-- dropdown buttons -->
    <path d="M981 366.500 h6 l-3 3.500z M981 395 h6 l-3 3.500z" fill="#e4e4e4"/>
    <!-- lock icons -->
    <rect x="807.500" y="388.500" width="11" height="11" fill="#d8d8d8" stroke="#d8d8d8"/><g fill="#555"><rect x="808" y="389" width="3.500" height="3.500"/><rect x="815" y="389" width="3.500" height="3.500"/><rect x="811.500" y="392.500" width="3.500" height="3.500"/><rect x="808" y="396" width="3.500" height="3.500"/><rect x="815" y="396" width="3.500" height="3.500"/></g>
    <path d="M842.500 387.500 L835 395.500" stroke="#d8d8d8" stroke-width="1.800" stroke-linecap="round"/><path d="M835.500 394.500 C833 395 832 396.500 831.500 398 C830.500 400 828.500 400.500 827 400 C829.500 401.500 834 401.500 836 399 C837.500 397.500 837.500 396.500 837 395.500 Z" fill="#d8d8d8"/>
    <path d="M856.500 389 v10 M851.500 394 h10" stroke="#d8d8d8" stroke-width="1.600"/><path d="M856.500 387 l-3 3.500 h6z M856.500 401 l-3 -3.500 h6z M849.500 394 l3.500 -3 v6z M863.500 394 l-3.500 -3 v6z" fill="#d8d8d8"/>
    <rect x="872.500" y="393.500" width="10" height="7" fill="#d8d8d8"/><path d="M874.500 393.500 v-2.500 a3 3 0 0 1 6 0 v2.500" fill="none" stroke="#d8d8d8" stroke-width="1.500"/><rect x="876.500" y="395.500" width="2" height="3" fill="#555"/>
  </svg>
  <div class="t" style="left:186px;top:269px;font-family:'Liberation Serif',serif;font-size:14.500px;font-weight:bold;color:#d8d8d8;line-height:23px">T</div>
  <!-- blend row -->
  <div class="dsel" style="left:49px;top:298px;width:108px;height:19px"></div>
  <div class="t" style="left:57px;top:299px;color:#c8c8c8">正常</div>
  <div class="t" style="left:164px;top:300px">不透明度:</div>
  <div class="vbox" style="left:220px;top:299px;width:36px;height:20px;line-height:19px;padding-left:3px;color:#d8d8d8;font-size:11px">100%</div>
  <div class="dbtn" style="left:255px;top:299px"></div>
  <!-- lock row -->
  <div class="t" style="left:51px;top:326px">锁定:</div>
  <div class="t" style="left:188px;top:326px">填充:</div>
  <div class="vbox" style="left:220px;top:327px;width:36px;height:20px;line-height:19px;padding-left:3px;color:#d8d8d8;font-size:11px">100%</div>
  <div class="dbtn" style="left:255px;top:327px"></div>

  <!-- layer rows -->
  <div class="row" style="top:349px;height:23px;border-top:1px solid #3e3e3e"><div class="eyecol"><div class="vis"></div></div><div class="thumb chk"><div class="fl"></div></div><div class="nm">花</div></div>
  <div class="row" style="top:372px;height:21px"><div class="eyecol"></div><div class="nm">11</div></div>
  <div class="row" style="top:393px;background:#52647f"><div class="eyecol" style="background:#535353"></div><div class="abs" style="left:31px;top:2px;width:35px;height:18px;border:1px solid #fff;background:#151515"></div><div class="abs" style="left:43px;top:2px;width:12px;height:18px;background:#151515"></div><div class="thumb chk"><div class="fl"></div></div><div class="nm">图层 1</div></div>
  <div class="row" style="top:415px;height:21px"><div class="eyecol"></div><div class="thumb" style="background:#0d0d2e"></div><div class="nm">背景 副本</div></div>
  <div class="row" style="top:436px"><div class="eyecol"><div class="vis"></div></div><div class="thumb" style="background:#0d0d2e"></div><div class="nm" style="font-style:italic;transform:skewX(-12deg);transform-origin:0 100%">背景</div></div>
  <svg class="abs" style="left:45px;top:350px" width="235" height="110" viewBox="765 410 235 110">
    <g id="eye1"><path d="M773 442.500 q7 -7 14 0 q-7 7 -14 0z" fill="#bdbdbd"/><circle cx="780" cy="442.500" r="2.300" fill="#4a4a4a"/><circle cx="780" cy="442.500" r="1" fill="#bdbdbd"/></g>
    <g><path d="M773 464 q7 -7 14 0 q-7 7 -14 0z" fill="#bdbdbd"/><circle cx="780" cy="464" r="2.300" fill="#4a4a4a"/><circle cx="780" cy="464" r="1" fill="#bdbdbd"/></g>
    <g><path d="M773 485.500 q7 -7 14 0 q-7 7 -14 0z" fill="#bdbdbd"/><circle cx="780" cy="485.500" r="2.300" fill="#4a4a4a"/><circle cx="780" cy="485.500" r="1" fill="#bdbdbd"/></g>
    <!-- group/link icon for "11" -->
    <path d="M811 437 h3 v3 h-3z M815 437 h2 M809 441 h4 v5 h-4z M815 447 h4 v-6 h-2" fill="#d8d8d8" stroke="#d8d8d8" stroke-width="1.200"/>
    <!-- lock -->
    <rect x="958.500" y="506.500" width="10" height="7" fill="none" stroke="#cfcfcf" stroke-width="1.300"/><path d="M960.500 506.500 v-2 a3 3 0 0 1 6 0 v2" fill="none" stroke="#cfcfcf" stroke-width="1.400"/><rect x="962.500" y="508.500" width="2" height="3" fill="#cfcfcf"/>
  </svg>
  <!-- right-edge widget -->
  <div class="abs" style="left:270px;top:109px;width:14px;height:60px;border-radius:4px;background:#2f3d54;border:1px solid #5c6a80"></div>
  <div class="abs" style="left:274px;top:124px;width:5px;height:38px;background:repeating-linear-gradient(to bottom,transparent 0 1px,#2f3d54 1px 3px),linear-gradient(to bottom,#b8a888,#a09880 30%,#6888b0 70%,#4878b0)"></div>
</div>

<!-- DIALOG -->
<div id="dlg" class="abs">
  <div class="tb abs"></div>
  <div class="ttl abs">新建</div>
  <div class="cls abs"><svg width="18" height="18" viewBox="0 0 18 18" style="position:absolute;left:0;top:0"><path d="M4.500 4.500 L13.500 13.500 M13.500 4.500 L4.500 13.500" stroke="#fff" stroke-width="2.200" stroke-linecap="round"/></svg></div>
  <div class="abs" style="left:0;top:28px;width:3px;height:303px;background:linear-gradient(to right,#0a2052,#2350a0 60%,#3366b0)"></div>
  <div class="body abs"></div>

  <!-- group box -->
  <div class="abs" style="left:13px;top:70px;width:343px;height:246px;border:1px solid #b8b8b8;box-shadow:1px 1px 0 #fdfdfd, inset 1px 1px 0 #fdfdfd"></div>
  <div class="abs" style="left:27px;top:69px;width:320px;height:4px;background:#ededed"></div>

  <div class="lb" style="left:-3px;top:41px">名称(<u>N</u>):</div>
  <div class="in" style="left:140px;top:38px;width:218px">未标题-1</div>

  <div class="lb" style="left:-46px;top:66px">预设(<u>P</u>):</div>
  <div class="se" style="left:96px;top:62px;width:244px;height:24px;line-height:25px">自定<i></i></div>

  <div class="lb dis" style="left:-3px;top:96px">大小(<u>I</u>):</div>
  <div class="se" style="left:140px;top:95px;width:194px;height:18px;background:#ededed;border-color:#c4c8cc"><i class="g" style="background:#e6e8ec"></i></div>

  <div class="lb" style="left:-3px;top:125px">宽度(<u>W</u>):</div>
  <div class="in" style="left:140px;top:122px;width:96px">500<span style="display:inline-block;width:1px;height:14px;background:#000;vertical-align:-3px"></span></div>
  <div class="se" style="left:240px;top:122px;width:94px">像素<i></i></div>

  <div class="lb" style="left:-3px;top:154px">高度(<u>H</u>):</div>
  <div class="in" style="left:140px;top:151px;width:96px">500</div>
  <div class="se" style="left:240px;top:151px;width:94px">像素<i></i></div>

  <div class="lb" style="left:-3px;top:184px">分辨率(<u>R</u>):</div>
  <div class="in" style="left:140px;top:181px;width:96px">200</div>
  <div class="se" style="left:240px;top:181px;width:94px">像素/英寸<i></i></div>

  <div class="lb" style="left:-3px;top:213px">颜色模式(<u>M</u>):</div>
  <div class="se" style="left:140px;top:210px;width:92px"><span style="letter-spacing:-0.6px">RGB</span> 颜色<i></i></div>
  <div class="se" style="left:240px;top:210px;width:94px">8 位<i></i></div>

  <div class="lb" style="left:-3px;top:243px">背景内容(<u>C</u>):</div>
  <div class="se" style="left:140px;top:240px;width:194px">透明<i></i></div>

  <!-- advanced -->
  <div class="abs" style="left:34px;top:280px;width:15px;height:15px;border-radius:50%;background:radial-gradient(circle at 40% 35%,#ffffff 0,#f4f4f4 55%,#c8c8c8 100%);border:1px solid #c0c0c0"></div>
  <svg class="abs" style="left:34px;top:280px" width="15" height="15" viewBox="0 0 15 15"><path d="M4.500 4 L7.500 6.800 L10.500 4 M4.500 7.800 L7.500 10.600 L10.500 7.800" fill="none" stroke="#111" stroke-width="1.500"/></svg>
  <div class="abs" style="left:55px;top:280px;line-height:17px">高级</div>
  <div class="abs" style="left:82px;top:287px;width:242px;height:1px;background:#b4b4b4;box-shadow:0 1px 0 #fbfbfb"></div>

  <!-- buttons -->
  <div class="bt" style="top:39px;box-shadow:inset 0 0 0 1px #a9c0ee, inset 0 0 0 2px #cfdcf6">确定</div>
  <div class="bt" style="top:66px">复位</div>
  <div class="bt" style="top:93px">存储预设(<u>S</u>)...</div>
  <div class="bt dis" style="top:121px;border-color:#c9c7ba;background:#efefef">删除预设(<u>D</u>)...</div>

  <div class="abs" style="left:400px;top:252px;line-height:17px;white-space:nowrap">图像大小:</div>
  <div class="abs" style="left:408px;top:276px;line-height:17px;white-space:nowrap">732.4K</div>
</div>
</body>
</html>
